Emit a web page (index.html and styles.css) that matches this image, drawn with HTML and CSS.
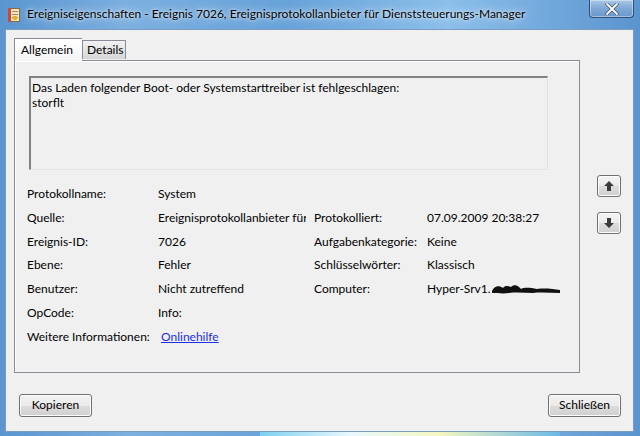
FILE: index.html
```html
<!DOCTYPE html>
<html lang="de">
<head>
<meta charset="utf-8">
<title>Ereigniseigenschaften</title>
<link rel="stylesheet" href="styles.css">
</head>
<body>
<div class="window">
  <div class="titlebar">
    <svg class="appicon" width="14" height="16" viewBox="0 0 14 16">
      <rect x="1.5" y="1.5" width="11" height="13" fill="#f3e6c4" stroke="#8a6a3a"/>
      <rect x="1" y="1" width="3" height="14" fill="#c84a3a"/>
      <rect x="5" y="4" width="6" height="1" fill="#b08a50"/>
      <rect x="5" y="7" width="6" height="1" fill="#b08a50"/>
      <rect x="5" y="10" width="6" height="1" fill="#b08a50"/>
      <circle cx="8" cy="11" r="2.2" fill="#e8b020"/>
    </svg>
    <span class="title">Ereigniseigenschaften - Ereignis 7026, Ereignisprotokollanbieter für Dienststeuerungs-Manager</span>
    <div class="closebtn">
      <svg width="14" height="12" viewBox="0 0 14 12"><path d="M2 1 L12 11 M12 1 L2 11" stroke="#3a4a5c" stroke-width="3.2" stroke-linecap="round"/><path d="M2 1 L12 11 M12 1 L2 11" stroke="#fff" stroke-width="1.8" stroke-linecap="round"/></svg>
    </div>
  </div>
  <div class="client">
    <div class="main">
      <div class="tabpane">
        <div class="tabs">
          <div class="tab active">Allgemein</div>
          <div class="tab">Details</div>
        </div>
        <div class="panel">
          <div class="desc">Das Laden folgender Boot- oder Systemstarttreiber ist fehlgeschlagen:<br>storflt</div>
          <div class="fields">
            <div class="lbl">Protokollname:</div><div class="val">System</div><div></div><div></div>
            <div class="lbl">Quelle:</div><div class="val clip"><span>Ereignisprotokollanbieter für</span></div><div class="lbl">Protokolliert:</div><div class="val">07.09.2009 20:38:27</div>
            <div class="lbl">Ereignis-ID:</div><div class="val">7026</div><div class="lbl">Aufgabenkategorie:</div><div class="val">Keine</div>
            <div class="lbl">Ebene:</div><div class="val">Fehler</div><div class="lbl">Schlüsselwörter:</div><div class="val">Klassisch</div>
            <div class="lbl">Benutzer:</div><div class="val">Nicht zutreffend</div><div class="lbl">Computer:</div><div class="val">Hyper-Srv1.<svg class="redact" width="70" height="12" viewBox="0 0 70 12"><path d="M1 8 C3 3 8 2 12 5 C14 2 18 3 20 4 C23 1 27 2 30 6 C34 4 40 5 46 6 C54 5 62 6 69 7 L69 10 C60 10 50 9 42 10 C34 10 26 9 18 10 C12 11 6 10 1 10 Z" fill="#111"/></svg></div>
            <div class="lbl">OpCode:</div><div class="val">Info:</div><div></div><div></div>
            <div class="lbl">Weitere Informationen:</div><div class="val"><a class="link" href="#">Onlinehilfe</a></div><div></div><div></div>
          </div>
        </div>
      </div>
      <div class="nav">
        <div class="navbtn"><svg width="12" height="12" viewBox="0 0 12 12"><path d="M6 1 L11 6 L8 6 L8 11 L4 11 L4 6 L1 6 Z" fill="#3c3c3c"/></svg></div>
        <div class="navbtn"><svg width="12" height="12" viewBox="0 0 12 12"><path d="M6 11 L11 6 L8 6 L8 1 L4 1 L4 6 L1 6 Z" fill="#3c3c3c"/></svg></div>
      </div>
    </div>
    <div class="buttons">
      <div class="btn">Kopieren</div>
      <div class="btn">Schließen</div>
    </div>
  </div>
</div>
</body>
</html>
```
FILE: styles.css
```css
html, body {
  margin: 0;
  padding: 0;
}
body {
  width: 640px;
  height: 436px;
  overflow: hidden;
  font-family: "Lato", "Open Sans", sans-serif;
  font-size: 12px;
  color: #000;
}
.window {
  width: 640px;
  height: 436px;
  display: flex;
  flex-direction: column;
  background: linear-gradient(90deg, #5a95d0 0%, #7cb0e0 20%, #67a2d9 45%, #8cbfea 70%, #5a94cf 100%);
  position: relative;
}
.window::after {
  content: "";
  position: absolute;
  left: 260px;
  right: 80px;
  bottom: 0;
  height: 5px;
  background: linear-gradient(90deg, #7cd0f0, #e8f8ff 30%, #f4f7c0 60%, #6ab8e8);
}
.titlebar {
  height: 29px;
  display: flex;
  align-items: flex-start;
  flex-shrink: 0;
}
.appicon {
  margin: 7px 0 0 7px;
}
.title {
  margin: 6px 0 0 6px;
  color: #000;
  font-size: 12px;
  white-space: nowrap;
  text-shadow: 0 0 8px rgba(255,255,255,0.9), 0 0 3px rgba(255,255,255,0.8);
}
.closebtn {
  margin-left: auto;
  margin-right: 6px;
  width: 45px;
  height: 18px;
  box-sizing: border-box;
  border: 1px solid #2f4f78;
  border-top: none;
  border-radius: 0 0 4px 4px;
  background: linear-gradient(#a9c8e6, #7fa8d4 50%, #6a98cc);
  display: flex;
  align-items: center;
  justify-content: center;
  box-shadow: inset 0 0 0 1px rgba(255,255,255,0.4);
}
.client {
  margin: 0 6px 4px 5px;
  flex: 1;
  background: #f0f0f0;
  border: 1px solid #7c9bbf;
  display: flex;
  flex-direction: column;
  padding: 7px 0 0 8px;
  position: relative;
  z-index: 1;
}
.main {
  display: flex;
}
.tabpane {
  width: 566px;
  display: flex;
  flex-direction: column;
}
.tabs {
  display: flex;
  align-items: flex-end;
  height: 23px;
  position: relative;
  z-index: 2;
}
.tab {
  box-sizing: border-box;
  height: 19px;
  padding: 0 4px;
  border: 1px solid #898c95;
  border-bottom: none;
  background: linear-gradient(#f2f2f2, #e4e4e4 50%, #d6d6d6);
  line-height: 18px;
  margin-bottom: 1px;
}
.tab.active {
  height: 23px;
  width: 68px;
  padding: 0 0 0 6px;
  line-height: 21px;
  margin-bottom: -1px;
  border-right: none;
  background: linear-gradient(#ffffff, #f4f4f4);
}
.tab.active + .tab {
  border-left: 1px solid #898c95;
  width: 44px;
}
.panel {
  height: 313px;
  box-sizing: border-box;
  border: 1px solid #898c95;
  background: #f0f0f0;
  padding: 15px 0 0 14px;
  box-shadow: inset 1px 1px 0 #fff;
}
.desc {
  box-sizing: border-box;
  width: 519px;
  height: 94px;
  border-top: 2px solid #828282;
  border-left: 2px solid #828282;
  border-right: 1px solid #e3e3e3;
  border-bottom: 1px solid #e3e3e3;
  padding: 2px 0 0 1px;
  line-height: 15px;
}
.fields {
  margin: 12px 0 0 -2px;
  display: grid;
  grid-template-columns: 131px 156px 113px 130px;
  grid-auto-rows: 23.8px;
  line-height: 23.8px;
  white-space: nowrap;
}
.val.clip {
  overflow: hidden;
  width: 148px;
}
.redact {
  vertical-align: -2px;
}
.link {
  color: #1b2fe6;
  text-decoration: underline;
  margin-left: 3px;
}
.nav {
  display: flex;
  flex-direction: column;
  gap: 15px;
  margin: 138px 0 0 17px;
}
.navbtn {
  width: 24px;
  height: 22px;
  box-sizing: border-box;
  border: 1px solid #707070;
  border-radius: 3px;
  background: linear-gradient(#f4f4f4, #ebebeb 50%, #dddddd 51%, #d0d0d0);
  box-shadow: inset 0 0 0 1px #fcfcfc;
  display: flex;
  align-items: center;
  justify-content: center;
}
.buttons {
  display: flex;
  justify-content: space-between;
  margin: 21px 12px 0 5px;
}
.btn {
  width: 73px;
  height: 23px;
  box-sizing: border-box;
  border: 1px solid #707070;
  border-radius: 3px;
  background: linear-gradient(#f2f2f2, #ebebeb 50%, #dddddd 51%, #cfcfcf);
  box-shadow: inset 0 0 0 1px #fcfcfc;
  text-align: center;
  line-height: 20px;
}
```
